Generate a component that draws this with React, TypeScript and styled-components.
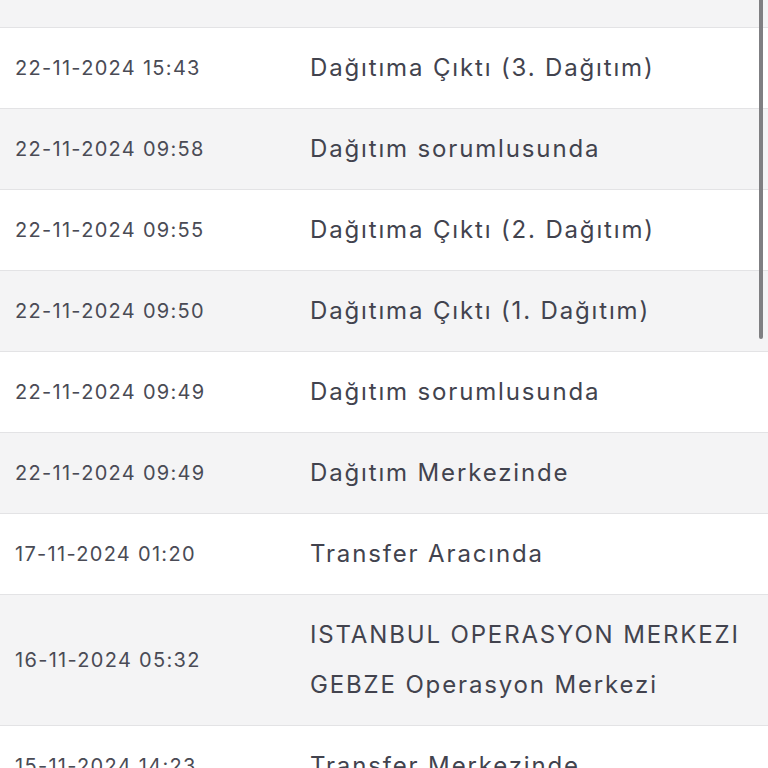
import React from "react";
import styled, { createGlobalStyle } from "styled-components";

const GlobalStyle = createGlobalStyle`
  html, body { margin: 0; padding: 0; background: #ffffff; }
  body { font-family: "Inter", "Noto Sans", sans-serif; overflow: hidden; }
`;

const Page = styled.div`
  position: relative;
  width: 768px;
  height: 768px;
  overflow: hidden;
  background: #ffffff;
`;

const Table = styled.div`
  display: flex;
  flex-direction: column;
`;

const Row = styled.div<{ $alt: boolean; $partial?: boolean }>`
  display: grid;
  grid-template-columns: 295px 1fr;
  align-items: center;
  background: ${(p) => (p.$alt ? "#f4f4f5" : "#ffffff")};
  border-bottom: 1px solid #e3e3e5;
  padding: ${(p) => (p.$partial ? "0" : "15px 0")};
  height: ${(p) => (p.$partial ? "27px" : "auto")};
  box-sizing: content-box;
`;

const DateCell = styled.div`
  padding-left: 15px;
  font-size: 20px;
  letter-spacing: 1.3px;
  color: #4a4b55;
  line-height: 50px;
  white-space: nowrap;
`;

const DescCell = styled.div`
  padding-left: 15px;
  padding-right: 12px;
  font-size: 24px;
  letter-spacing: 1.85px;
  color: #42434e;
  line-height: 50px;
  white-space: nowrap;
`;

const Scrollbar = styled.div`
  position: absolute;
  top: -6px;
  right: 5px;
  width: 4px;
  height: 345px;
  border-radius: 2px;
  background: #7f7f82;
`;

const rows: { date: string; desc: string[] }[] = [
  { date: "22-11-2024 15:43", desc: ["Dağıtıma Çıktı (3. Dağıtım)"] },
  { date: "22-11-2024 09:58", desc: ["Dağıtım sorumlusunda"] },
  { date: "22-11-2024 09:55", desc: ["Dağıtıma Çıktı (2. Dağıtım)"] },
  { date: "22-11-2024 09:50", desc: ["Dağıtıma Çıktı (1. Dağıtım)"] },
  { date: "22-11-2024 09:49", desc: ["Dağıtım sorumlusunda"] },
  { date: "22-11-2024 09:49", desc: ["Dağıtım Merkezinde"] },
  { date: "17-11-2024 01:20", desc: ["Transfer Aracında"] },
  { date: "16-11-2024 05:32", desc: ["ISTANBUL OPERASYON MERKEZI", "GEBZE Operasyon Merkezi"] },
  { date: "15-11-2024 14:23", desc: ["Transfer Merkezinde"] },
];

export default function App() {
  return (
    <Page>
      <GlobalStyle />
      <Table>
        <Row $alt $partial />
        {rows.map((r, i) => (
          <Row key={i} $alt={i % 2 === 1}>
            <DateCell>{r.date}</DateCell>
            <DescCell>
              {r.desc.map((d, j) => (
                <div key={j}>{d}</div>
              ))}
            </DescCell>
          </Row>
        ))}
      </Table>
      <Scrollbar />
    </Page>
  );
}
